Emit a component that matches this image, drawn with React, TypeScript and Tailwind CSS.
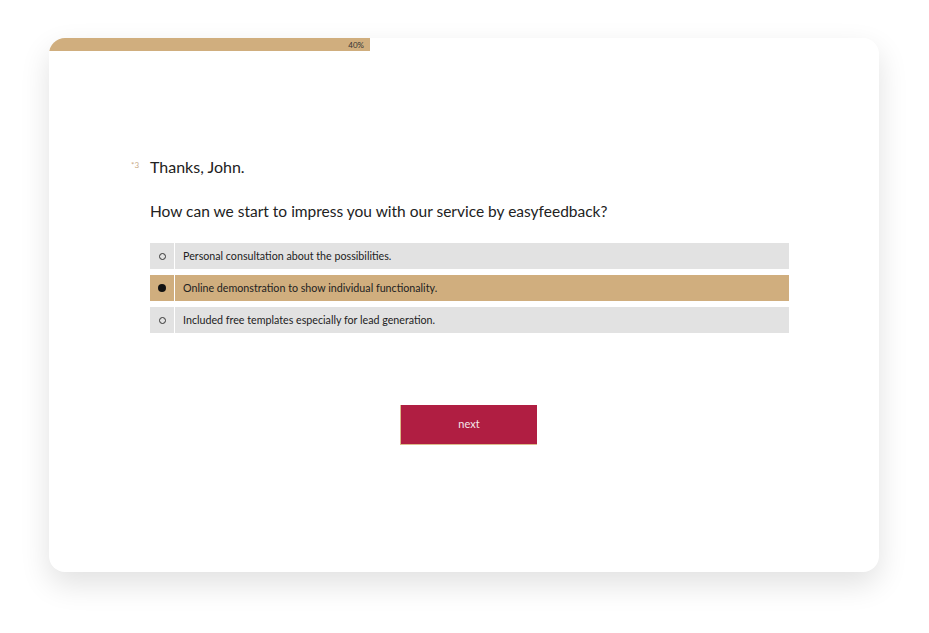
import React, { useState } from 'react';

const options = [
  'Personal consultation about the possibilities.',
  'Online demonstration to show individual functionality.',
  'Included free templates especially for lead generation.',
];

const App: React.FC = () => {
  const [selected, setSelected] = useState(1);

  return (
    <div className="w-[929px] h-[633px] bg-white pt-[38px] pl-[49px] font-['Lato','Liberation_Sans',sans-serif] text-[#222]">
      {/* Survey card */}
      <div className="w-[830px] h-[534px] bg-white rounded-2xl shadow-[0_12px_30px_rgba(0,0,0,0.12)] overflow-hidden flex flex-col">
        {/* Progress bar */}
        <div className="h-[13px] w-[321px] bg-[#d0ae7e] rounded-tl-2xl flex items-center justify-end pr-[6px]">
          <span className="text-[8px] leading-none text-[#333]">40%</span>
        </div>

        <div className="ml-[101px] w-[639px] mt-[104px] flex flex-col">
          {/* Question heading */}
          <div className="relative">
            <span className="absolute -left-[19px] top-[4px] text-[8px] text-[#c9ab88]">*3</span>
            <p className="text-[16px] leading-6">Thanks, John.</p>
          </div>
          <p className="mt-[20px] text-[15.5px] leading-6">
            How can we start to impress you with our service by easyfeedback?
          </p>

          {/* Answer options */}
          <div className="mt-[20px] flex flex-col gap-[6px]">
            {options.map((label, i) => {
              const active = i === selected;
              return (
                <button
                  key={label}
                  onClick={() => setSelected(i)}
                  className="flex h-[26px] gap-px text-left"
                >
                  <span
                    className={`w-[24px] flex items-center justify-center ${active ? 'bg-[#d0ae7e]' : 'bg-[#e2e2e2]'}`}
                  >
                    {active ? (
                      <span className="w-[8px] h-[8px] rounded-full bg-[#111]" />
                    ) : (
                      <span className="w-[7px] h-[7px] rounded-full border border-[#333]" />
                    )}
                  </span>
                  <span
                    className={`flex-1 flex items-center pl-[8px] text-[10.7px] ${active ? 'bg-[#d0ae7e]' : 'bg-[#e2e2e2]'}`}
                  >
                    {label}
                  </span>
                </button>
              );
            })}
          </div>

          {/* Next button */}
          <div className="mt-[72px] flex">
            <button className="ml-[250px] w-[137px] h-[40px] bg-[#b01e42] border-l border-b border-[#dcbc8c] text-[11px] text-[#f4e6e9]">
              next
            </button>
          </div>
        </div>
      </div>
    </div>
  );
};

export default App;
